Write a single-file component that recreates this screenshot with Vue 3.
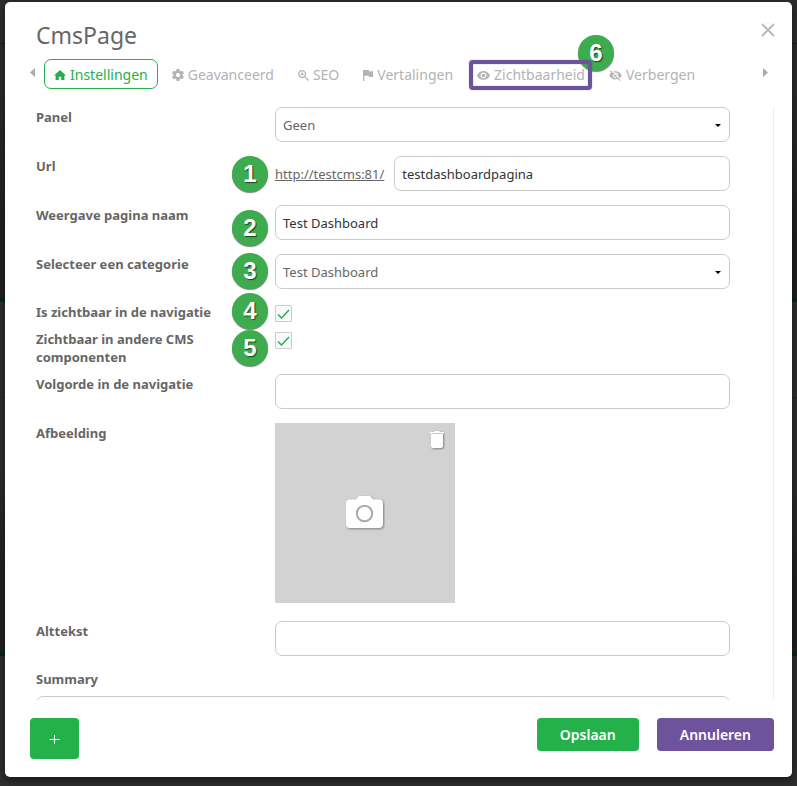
<script setup>
import { ref } from 'vue'

const tabs = [
  { id: 'settings', label: 'Instellingen' },
  { id: 'advanced', label: 'Geavanceerd' },
  { id: 'seo', label: 'SEO' },
  { id: 'translations', label: 'Vertalingen' },
  { id: 'visibility', label: 'Zichtbaarheid' },
  { id: 'hide', label: 'Verbergen' },
]
const active = ref('settings')
const panel = ref('Geen')
const url = ref('testdashboardpagina')
const name = ref('Test Dashboard')
const category = ref('Test Dashboard')
const inNavigation = ref(true)
const inComponents = ref(true)
const order = ref('')
const alt = ref('')
const summary = ref('')
</script>

<template>
  <div class="backdrop">
    <section class="modal" role="dialog" aria-labelledby="dialog-title">
      <header class="head">
        <h1 id="dialog-title">CmsPage</h1>
        <button class="close" type="button" aria-label="Sluiten">
          <svg width="14" height="14" viewBox="0 0 14 14"><path d="M1 1 13 13M13 1 1 13" /></svg>
        </button>
      </header>

      <nav class="tabbar">
        <button class="arrow" type="button" aria-label="Vorige">
          <svg width="5" height="9" viewBox="0 0 5 9"><path d="M5 0v9L0 4.5z" /></svg>
        </button>
        <div class="tabs">
          <button
            v-for="tab in tabs"
            :key="tab.id"
            type="button"
            class="tab"
            :class="[tab.id, { active: active === tab.id }]"
            @click="active = tab.id"
          >
            <svg v-if="tab.id === 'settings'" class="icon" width="12" height="10" viewBox="0 0 12 10">
              <path d="M6 0 0 5.4h1.6V10h3.2V6.7h2.4V10h3.2V5.4H12z" />
            </svg>
            <svg v-else-if="tab.id === 'advanced'" class="icon" width="12" height="12" viewBox="2 2 20 20">
              <path d="M19.43 12.98c.04-.32.07-.64.07-.98s-.03-.66-.07-.98l2.11-1.65c.19-.15.24-.42.12-.64l-2-3.46c-.12-.22-.39-.3-.61-.22l-2.49 1c-.52-.4-1.08-.73-1.69-.98l-.38-2.65C14.46 2.18 14.25 2 14 2h-4c-.25 0-.46.18-.49.42l-.38 2.65c-.61.25-1.17.59-1.69.98l-2.49-1c-.23-.09-.49 0-.61.22l-2 3.46c-.13.22-.07.49.12.64l2.11 1.65c-.04.32-.07.65-.07.98s.03.66.07.98l-2.11 1.65c-.19.15-.24.42-.12.64l2 3.46c.12.22.39.3.61.22l2.49-1c.52.4 1.08.73 1.69.98l.38 2.65c.03.24.24.42.49.42h4c.25 0 .46-.18.49-.42l.38-2.65c.61-.25 1.17-.59 1.69-.98l2.49 1c.23.09.49 0 .61-.22l2-3.46c.12-.22.07-.49-.12-.64l-2.11-1.65zM12 15.5c-1.93 0-3.5-1.57-3.5-3.5s1.57-3.5 3.5-3.5 3.5 1.57 3.5 3.5-1.57 3.5-3.5 3.5z" />
            </svg>
            <svg v-else-if="tab.id === 'seo'" class="icon" width="11" height="11" viewBox="3 3 17.5 17.5">
              <path d="M15.5 14h-.79l-.28-.27C15.41 12.59 16 11.11 16 9.5 16 5.91 13.09 3 9.5 3S3 5.91 3 9.5 5.91 16 9.5 16c1.61 0 3.09-.59 4.23-1.57l.27.28v.79l5 4.99L20.49 19l-4.99-5zm-6 0C7.01 14 5 11.99 5 9.5S7.01 5 9.5 5 14 7.01 14 9.5 11.99 14 9.5 14zM6.5 8.7h2.2V6.5h1.6v2.2h2.2v1.6h-2.2v2.2H8.7v-2.2H6.5z" />
            </svg>
            <svg v-else-if="tab.id === 'translations'" class="icon" width="10" height="11" viewBox="0 0 10 11">
              <path d="M0 0h5.6l.4 1.2h4V7H6.3l-.4-1.2H1.3V11H0z" />
            </svg>
            <svg v-else-if="tab.id === 'visibility'" class="icon" width="13" height="9" viewBox="1 4.5 22 15">
              <path d="M12 4.5C7 4.5 2.73 7.61 1 12c1.73 4.39 6 7.5 11 7.5s9.27-3.11 11-7.5c-1.73-4.39-6-7.5-11-7.5zM12 17c-2.76 0-5-2.24-5-5s2.24-5 5-5 5 2.24 5 5-2.24 5-5 5zm0-8c-1.66 0-3 1.34-3 3s1.34 3 3 3 3-1.34 3-3-1.34-3-3-3z" />
            </svg>
            <svg v-else class="icon" width="13" height="11" viewBox="1 2.5 22 19.5">
              <path d="M12 7c2.76 0 5 2.24 5 5 0 .65-.13 1.26-.36 1.83l2.92 2.92c1.51-1.26 2.7-2.89 3.43-4.75-1.73-4.39-6-7.5-11-7.5-1.4 0-2.74.25-3.98.7l2.16 2.16C10.74 7.13 11.35 7 12 7zM2 4.27l2.28 2.28.46.46C3.08 8.3 1.78 10.02 1 12c1.73 4.39 6 7.5 11 7.5 1.55 0 3.03-.3 4.38-.84l.42.42L19.73 22 21 20.73 3.27 3 2 4.27zM7.53 9.8l1.55 1.55c-.05.21-.08.43-.08.65 0 1.66 1.34 3 3 3 .22 0 .44-.03.65-.08l1.55 1.55c-.67.33-1.41.53-2.2.53-2.76 0-5-2.24-5-5 0-.79.2-1.53.53-2.2zm4.31-.78l3.15 3.15.02-.16c0-1.66-1.34-3-3-3l-.17.01z" />
            </svg>
            <span>{{ tab.label }}</span>
            <b v-if="tab.id === 'visibility'" class="badge six">6</b>
          </button>
        </div>
        <button class="arrow" type="button" aria-label="Volgende">
          <svg width="5" height="9" viewBox="0 0 5 9"><path d="M0 0v9l5-4.5z" /></svg>
        </button>
      </nav>

      <form id="page-form" class="form" @submit.prevent>
        <div class="row">
          <label for="panel">Panel</label>
          <div class="control">
            <select id="panel" v-model="panel"><option>Geen</option></select>
            <svg class="caret" width="6" height="3" viewBox="0 0 6 3"><path d="M0 0h6L3 3z" /></svg>
          </div>
        </div>
        <div class="row">
          <label for="url">Url</label>
          <div class="control inline">
            <b class="badge one">1</b>
            <a href="http://testcms:81/">http://testcms:81/</a>
            <input id="url" v-model="url" type="text" />
          </div>
        </div>
        <div class="row">
          <label for="name">Weergave pagina naam</label>
          <div class="control">
            <b class="badge two">2</b>
            <input id="name" v-model="name" type="text" />
          </div>
        </div>
        <div class="row">
          <label for="category">Selecteer een categorie</label>
          <div class="control">
            <b class="badge three">3</b>
            <select id="category" v-model="category"><option>Test Dashboard</option></select>
            <svg class="caret" width="6" height="3" viewBox="0 0 6 3"><path d="M0 0h6L3 3z" /></svg>
          </div>
        </div>
        <div class="row check">
          <label for="nav">Is zichtbaar in de navigatie</label>
          <div class="control">
            <b class="badge four">4</b>
            <input id="nav" v-model="inNavigation" type="checkbox" />
            <svg v-if="inNavigation" class="tick" width="13" height="10" viewBox="0 0 13 10"><path d="M1 5.5 4.5 9 12 1" /></svg>
          </div>
        </div>
        <div class="row check">
          <label for="components">Zichtbaar in andere CMS componenten</label>
          <div class="control">
            <b class="badge five">5</b>
            <input id="components" v-model="inComponents" type="checkbox" />
            <svg v-if="inComponents" class="tick" width="13" height="10" viewBox="0 0 13 10"><path d="M1 5.5 4.5 9 12 1" /></svg>
          </div>
        </div>
        <div class="row">
          <label for="order">Volgorde in de navigatie</label>
          <div class="control"><input id="order" v-model="order" type="text" /></div>
        </div>
        <div class="row image-row">
          <span class="label">Afbeelding</span>
          <div class="image">
            <button class="camera" type="button" aria-label="Afbeelding kiezen">
              <svg width="40" height="36" viewBox="0 0 40 36">
                <path class="shade" d="M5 4.500h6L14 1h11l3.500 3.500H34a4 4 0 0 1 4 4V29a4 4 0 0 1-4 4H5a4 4 0 0 1-4-4V8.500a4 4 0 0 1 4-4z" />
                <circle class="lens" cx="19.500" cy="18.500" r="7.700" />
              </svg>
            </button>
            <button class="trash" type="button" aria-label="Verwijderen">
              <svg width="16" height="20" viewBox="0 0 16 20">
                <path class="shade" d="M1 2h4l1-1h4l1 1h4v1.500H1zM2 4h12v12a2 2 0 0 1-2 2H4a2 2 0 0 1-2-2z" />
              </svg>
            </button>
          </div>
        </div>
        <div class="row">
          <label for="alt">Alttekst</label>
          <div class="control"><input id="alt" v-model="alt" type="text" /></div>
        </div>
        <div class="summary">
          <label for="summary">Summary</label>
          <textarea id="summary" v-model="summary" rows="4"></textarea>
        </div>
      </form>

      <footer class="foot">
        <button class="btn add" type="button" aria-label="Toevoegen">
          <svg width="11" height="11" viewBox="0 0 11 11"><path d="M5.5 1v9M.5 5.500h10" /></svg>
        </button>
        <div class="actions">
          <button class="btn" type="submit" form="page-form">Opslaan</button>
          <button class="btn cancel" type="button">Annuleren</button>
        </div>
      </footer>
    </section>
  </div>
</template>

<style>
body {
  margin: 0;
  background: #2d2c2c;
}
</style>

<style scoped>
* {
  box-sizing: border-box;
}
.backdrop {
  height: 100vh;
  padding: 2px 5px 9px;
  display: flex;
  font-family: "Noto Sans", sans-serif;
  font-size: 13px;
  line-height: 18px;
  color: #666;
  background: linear-gradient(
    #2d2d2d 0 43px, #0d2212 43px 44px, #2d2c2a 44px 80px, #202020 240px 298px,
    #0b2611 298px 302px, #2e2e2e 302px 397px, #12301a 397px 398px, #2e2e2e 398px 470px,
    #202020 580px 652px, #0b2611 652px 656px, #2f2e2e 656px
  );
}
button, input, select, textarea {
  font: inherit;
  margin: 0;
}
button {
  padding: 0;
  border: 0;
  background: none;
  cursor: pointer;
}
svg {
  display: block;
  flex: none;
  fill: currentColor;
}
.modal {
  flex: 1;
  min-width: 0;
  display: flex;
  flex-direction: column;
  background: #fff;
  border-radius: 5px;
  box-shadow: 0 3px 9px rgba(0, 0, 0, 0.5);
}
.head {
  display: flex;
  justify-content: space-between;
  align-items: flex-start;
  padding: 17px 17px 8px 31px;
}
h1 {
  margin: 0;
  font-size: 23px;
  line-height: 32px;
  font-weight: 400;
}
.close {
  padding: 4px 0;
}
.close path {
  fill: none;
  stroke: #bbb;
  stroke-width: 2;
}
.tabbar {
  display: flex;
  align-items: center;
  padding: 0 24px 0 25px;
}
.arrow {
  color: #aaa;
  padding-bottom: 4px;
}
.tabs {
  flex: 1;
  display: flex;
  gap: 4px;
  padding-left: 9px;
}
.tab {
  position: relative;
  display: flex;
  align-items: center;
  gap: 4px;
  height: 30px;
  padding: 2px 9px 0;
  border: 1px solid transparent;
  border-radius: 7px;
  color: #b3b3b3;
  font-size: 14px;
  white-space: nowrap;
}
.tab.active {
  color: #24b14b;
  border-color: #24b14b;
}
.tab.visibility::after {
  content: "";
  position: absolute;
  inset: 0 2px -2px 1px;
  border: 4px solid #6d529c;
  border-radius: 4px;
  box-shadow: 0 0 1px #555, inset 0 0 1px #555;
}
.form {
  flex: 1;
  min-height: 0;
  overflow: hidden;
  margin: 18px 18px 0 0;
  padding: 0 43px 0 31px;
  border-right: 1px solid #eee;
}
.row {
  display: grid;
  grid-template-columns: 180px minmax(0, 1fr);
  column-gap: 59px;
  align-items: start;
  padding-bottom: 14px;
}
.row.check {
  padding-bottom: 8px;
}
.row.image-row {
  padding-bottom: 18px;
}
label, .label {
  font-weight: 700;
  padding-top: 1px;
}
.check label {
  padding-top: 0;
}
.control {
  position: relative;
}
.control.inline {
  display: flex;
  align-items: center;
  gap: 10px;
}
.inline input {
  flex: 1;
  min-width: 0;
}
a {
  color: #666;
}
input[type="text"], select, textarea {
  display: block;
  width: 100%;
  height: 35px;
  padding: 0 7px;
  border: 1px solid #ccc;
  border-radius: 7px;
  background: #fff;
  color: #333;
  outline: 0;
}
select {
  appearance: none;
  padding-top: 1px;
  color: #666;
}
.caret {
  position: absolute;
  right: 9px;
  top: 17px;
  color: #000;
}
.check .control {
  padding-top: 2px;
}
input[type="checkbox"] {
  appearance: none;
  display: block;
  width: 17px;
  height: 17px;
  border: 1px solid #ccc;
  border-radius: 1px;
  background: #fafafa;
}
.tick {
  position: absolute;
  left: 2px;
  top: 6px;
  pointer-events: none;
}
.tick path {
  fill: none;
  stroke: #24b14b;
  stroke-width: 1.5;
}
.badge {
  position: absolute;
  left: -43px;
  width: 36px;
  height: 36px;
  border-radius: 50%;
  background: #3dab4e;
  box-shadow: 0 1px 1px rgba(0, 0, 0, 0.5);
  color: #fff;
  font: 700 24px/36px "Liberation Sans", sans-serif;
  text-align: center;
  text-shadow: 1px 1px 1px rgba(0, 0, 0, 0.6);
}
.one { top: 0; }
.two { top: 5px; }
.three { top: -1px; }
.four { top: -10px; }
.five { top: 0; }
.six {
  left: auto;
  right: -20px;
  top: -25px;
}
.image {
  position: relative;
  display: flex;
  align-items: center;
  justify-content: center;
  width: 180px;
  height: 180px;
  background: #d2d2d2;
}
.shade {
  fill: #fff;
  filter: drop-shadow(1px 1px 1px rgba(0, 0, 0, 0.4));
}
.lens {
  fill: none;
  stroke: #aaa;
  stroke-width: 2;
}
.trash {
  position: absolute;
  top: 7px;
  right: 10px;
}
.summary label {
  display: block;
  padding: 0 0 8px;
}
textarea {
  height: 80px;
  resize: none;
}
.foot {
  display: flex;
  justify-content: space-between;
  align-items: flex-start;
  padding: 18px 18px 18px 25px;
}
.actions {
  display: flex;
  gap: 18px;
}
.btn {
  height: 33px;
  padding: 0 23px;
  border-radius: 4px;
  background: #24b14b;
  color: #fff;
  font-size: 14px;
  font-weight: 600;
}
.add {
  display: flex;
  align-items: center;
  justify-content: center;
  width: 49px;
  height: 41px;
  padding: 2px 0 0;
}
.add path {
  fill: none;
  stroke: #fff;
  stroke-width: 1;
}
.cancel {
  background: #6d529c;
}
</style>
